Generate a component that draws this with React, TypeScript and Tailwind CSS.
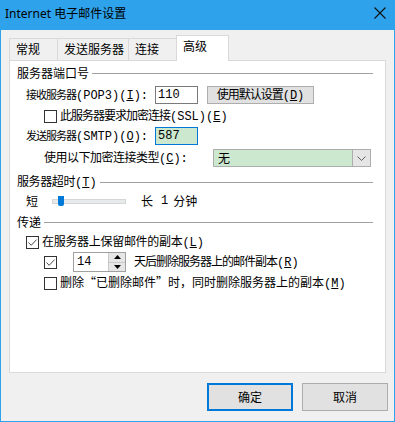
import React from "react";

const CJK = '"Noto Sans CJK SC", "Noto Sans", sans-serif';
const MONO = '"Liberation Mono", "Noto Sans CJK SC", monospace';

function isCjk(ch: string) {
  return /[\u2000-\u206f\u3000-\u9fff\uff00-\uffef]/.test(ch);
}

// Renders mixed text: CJK runs in Noto Sans CJK (with given tracking), ASCII runs in mono.
function Mixed({ text, tr = "", u }: { text: string; tr?: string; u?: string }) {
  const runs: { cjk: boolean; s: string }[] = [];
  for (const ch of text) {
    const c = isCjk(ch);
    if (runs.length && runs[runs.length - 1].cjk === c) runs[runs.length - 1].s += ch;
    else runs.push({ cjk: c, s: ch });
  }
  return (
    <span className="whitespace-nowrap">
      {runs.map((r, i) =>
        r.cjk ? (
          <span key={i} className={tr} style={{ fontFamily: CJK }}>
            {r.s}
          </span>
        ) : (
          <span key={i} style={{ fontFamily: MONO }}>
            {u && r.s.includes("(" + u + ")") ? (
              <>
                {r.s.slice(0, r.s.indexOf("(" + u + ")") + 1)}
                <u>{u}</u>
                {r.s.slice(r.s.indexOf("(" + u + ")") + 2)}
              </>
            ) : (
              r.s
            )}
          </span>
        )
      )}
    </span>
  );
}

function Check({ checked }: { checked?: boolean }) {
  return (
    <div className="w-[13px] h-[13px] border border-[#333333] bg-white shrink-0 flex items-center justify-center">
      {checked && (
        <svg width="11" height="11" viewBox="0 0 11 11">
          <path d="M1.5 5.5 L4.2 8.3 L9.6 2.6" fill="none" stroke="#4a4a4a" strokeWidth="1" />
        </svg>
      )}
    </div>
  );
}

function Header({ children }: { children: React.ReactNode }) {
  return (
    <div className="flex items-center h-full">
      <div className="text-[12px] leading-[16px] text-black">{children}</div>
      <div className="flex-1 h-px bg-[#a0a0a0] ml-[3px]" />
    </div>
  );
}

export default function App() {
  return (
    <div
      className="w-[395px] h-[422px] bg-[#f0f0f0] border border-[#2ea3ec] flex flex-col overflow-hidden text-black"
      style={{ fontFamily: CJK }}
    >
      {/* Title bar */}
      <div className="h-[29px] bg-[#2ea3ec] flex items-start justify-between shrink-0">
        <div className="pl-[4px] pt-[5px] text-[12px] leading-[16px] text-black" style={{ fontFamily: '"Noto Sans", "Noto Sans CJK SC", sans-serif' }}>
          Internet 电子邮件设置
        </div>
        <svg width="12" height="12" viewBox="0 0 12 12" className="mt-[6px] mr-[8px]">
          <path d="M0.5 0.5 L11.5 11.5 M11.5 0.5 L0.5 11.5" stroke="#111" strokeWidth="1.1" />
        </svg>
      </div>

      {/* Tabs */}
      <div className="mt-[5px] ml-[8px] h-[25px] flex items-end shrink-0 text-[12px] leading-[16px]">
        <div className="w-[49px] h-[22px] border-l border-t border-r border-[#d9d9d9] bg-[#f0f0f0] pl-[6px] pt-[2px]">常规</div>
        <div className="w-[71px] h-[22px] border-t border-r border-[#d9d9d9] bg-[#f0f0f0] pl-[6px] pt-[2px]">发送服务器</div>
        <div className="w-[48px] h-[22px] border-t border-r border-[#d9d9d9] bg-[#f0f0f0] pl-[6px] pt-[2px]">连接</div>
        <div className="relative z-10 -ml-px w-[53px] h-[26px] -mb-px border-l border-t border-r border-[#d9d9d9] bg-white pl-[6px] pt-[2px]">高级</div>
      </div>

      {/* Panel */}
      <div className="relative mx-[8px] h-[313px] bg-white border border-[#d9d9d9] shrink-0">
        <div className="pl-[7px] pr-[12px] text-[12px] leading-[16px]">
          {/* 服务器端口号 */}
          <div className="h-[24px]">
            <Header>服务器端口号</Header>
          </div>
          {/* POP3 row */}
          <div className="h-[20px] flex items-center">
            <div className="ml-[9px] w-[129px]">
              <Mixed text="接收服务器(POP3)(I):" tr="text-[11px] tracking-[-1px]" u="I" />
            </div>
            <div className="w-[43px] h-[18px] border border-[#7a7a7a] bg-white flex items-center pl-[2px]" style={{ fontFamily: MONO }}>
              110
            </div>
            <div className="ml-[9px] w-[107px] h-[18px] border border-[#adadad] bg-[#e1e1e1] flex items-center justify-center">
              <Mixed text="使用默认设置(D)" tr="tracking-[-1px]" u="D" />
            </div>
          </div>
          {/* SSL */}
          <div className="h-[22px] flex items-center">
            <div className="ml-[27px]">
              <Check />
            </div>
            <div className="ml-[3px]">
              <Mixed text="此服务器要求加密连接(SSL)(E)" tr="tracking-[-1px]" u="E" />
            </div>
          </div>
          {/* SMTP */}
          <div className="h-[18px] flex items-center">
            <div className="ml-[9px] w-[129px]">
              <Mixed text="发送服务器(SMTP)(O):" tr="text-[11px] tracking-[-1px]" u="O" />
            </div>
            <div className="w-[43px] h-[18px] border border-[#0078d7] bg-[#cce8cf] flex items-center pl-[2px]" style={{ fontFamily: MONO }}>
              587
            </div>
          </div>
          {/* Encryption type */}
          <div className="mt-[4px] h-[18px] flex items-center">
            <div className="ml-[27px] w-[169px]">
              <Mixed text="使用以下加密连接类型(C):" tr="tracking-[-0.5px]" u="C" />
            </div>
            <div className="w-[158px] h-[18px] border border-[#adadad] bg-[#cce8cf] flex items-center">
              <div className="flex-1 pl-[4px]">无</div>
              <div className="w-[18px] h-full border-l border-[#adadad] bg-[#e5e5e5] flex items-center justify-center">
                <svg width="9" height="5" viewBox="0 0 9 5">
                  <path d="M0.5 0.5 L4.5 4.5 L8.5 0.5" fill="none" stroke="#606060" strokeWidth="1" />
                </svg>
              </div>
            </div>
          </div>
          {/* 服务器超时 */}
          <div className="mt-[5px] h-[20px]">
            <Header>
              <Mixed text="服务器超时(T)" tr="tracking-[-0.4px]" u="T" />
            </Header>
          </div>
          {/* Slider */}
          <div className="h-[18px] flex items-center">
            <div className="ml-[9px] w-[12px]">短</div>
            <div className="relative ml-[14px] w-[74px] h-[5px] bg-[#e7eaea] border border-[#d6d6d6]">
              <div className="absolute left-[5px] top-[-4px] w-[6px] h-[10px] bg-[#007ad9] rounded-b-[2px]" />
            </div>
            <div className="ml-[15px] flex items-center whitespace-nowrap">
              <span>长</span>
              <span className="ml-[8px]" style={{ fontFamily: MONO }}>1</span>
              <span className="ml-[5px]">分钟</span>
            </div>
          </div>
          {/* 传递 */}
          <div className="h-[24px]">
            <Header>传递</Header>
          </div>
          {/* Keep copy */}
          <div className="h-[16px] flex items-center">
            <div className="ml-[9px]">
              <Check checked />
            </div>
            <div className="ml-[3px]">
              <Mixed text="在服务器上保留邮件的副本(L)" tr="tracking-[-0.3px]" u="L" />
            </div>
          </div>
          {/* Delete after N days */}
          <div className="mt-[2px] h-[20px] flex items-center">
            <div className="ml-[27px]">
              <Check checked />
            </div>
            <div className="ml-[16px] w-[53px] h-[20px] border border-[#a0a0a0] bg-white flex items-stretch">
              <div className="flex-1 flex items-center pl-[3px]" style={{ fontFamily: MONO }}>
                14
              </div>
              <div className="w-[17px] flex flex-col border-l border-[#c8c8c8] bg-[#e6e6e6]">
                <div className="flex-1 flex items-center justify-center border-b border-[#c8c8c8]">
                  <svg width="7" height="4" viewBox="0 0 7 4">
                    <path d="M0 4 L3.5 0 L7 4 Z" fill="#000" />
                  </svg>
                </div>
                <div className="flex-1 flex items-center justify-center">
                  <svg width="7" height="4" viewBox="0 0 7 4">
                    <path d="M0 0 L3.5 4 L7 0 Z" fill="#000" />
                  </svg>
                </div>
              </div>
            </div>
            <div className="ml-[8px]">
              <Mixed text="天后删除服务器上的邮件副本(R)" tr="tracking-[-1px]" u="R" />
            </div>
          </div>
          {/* Delete when deleted */}
          <div className="mt-[2px] h-[18px] flex items-center">
            <div className="ml-[27px]">
              <Check />
            </div>
            <div className="ml-[3px]">
              <Mixed text="删除“已删除邮件”时，同时删除服务器上的副本(M)" u="M" />
            </div>
          </div>
        </div>
      </div>

      {/* Buttons */}
      <div className="mt-[10px] pr-[6px] flex justify-end gap-[9px] text-[12px]">
        <div className="w-[86px] h-[28px] border-2 border-[#0078d7] bg-[#e1e1e1] flex items-center justify-center">确定</div>
        <div className="w-[86px] h-[28px] border border-[#adadad] bg-[#e1e1e1] flex items-center justify-center">取消</div>
      </div>
    </div>
  );
}
